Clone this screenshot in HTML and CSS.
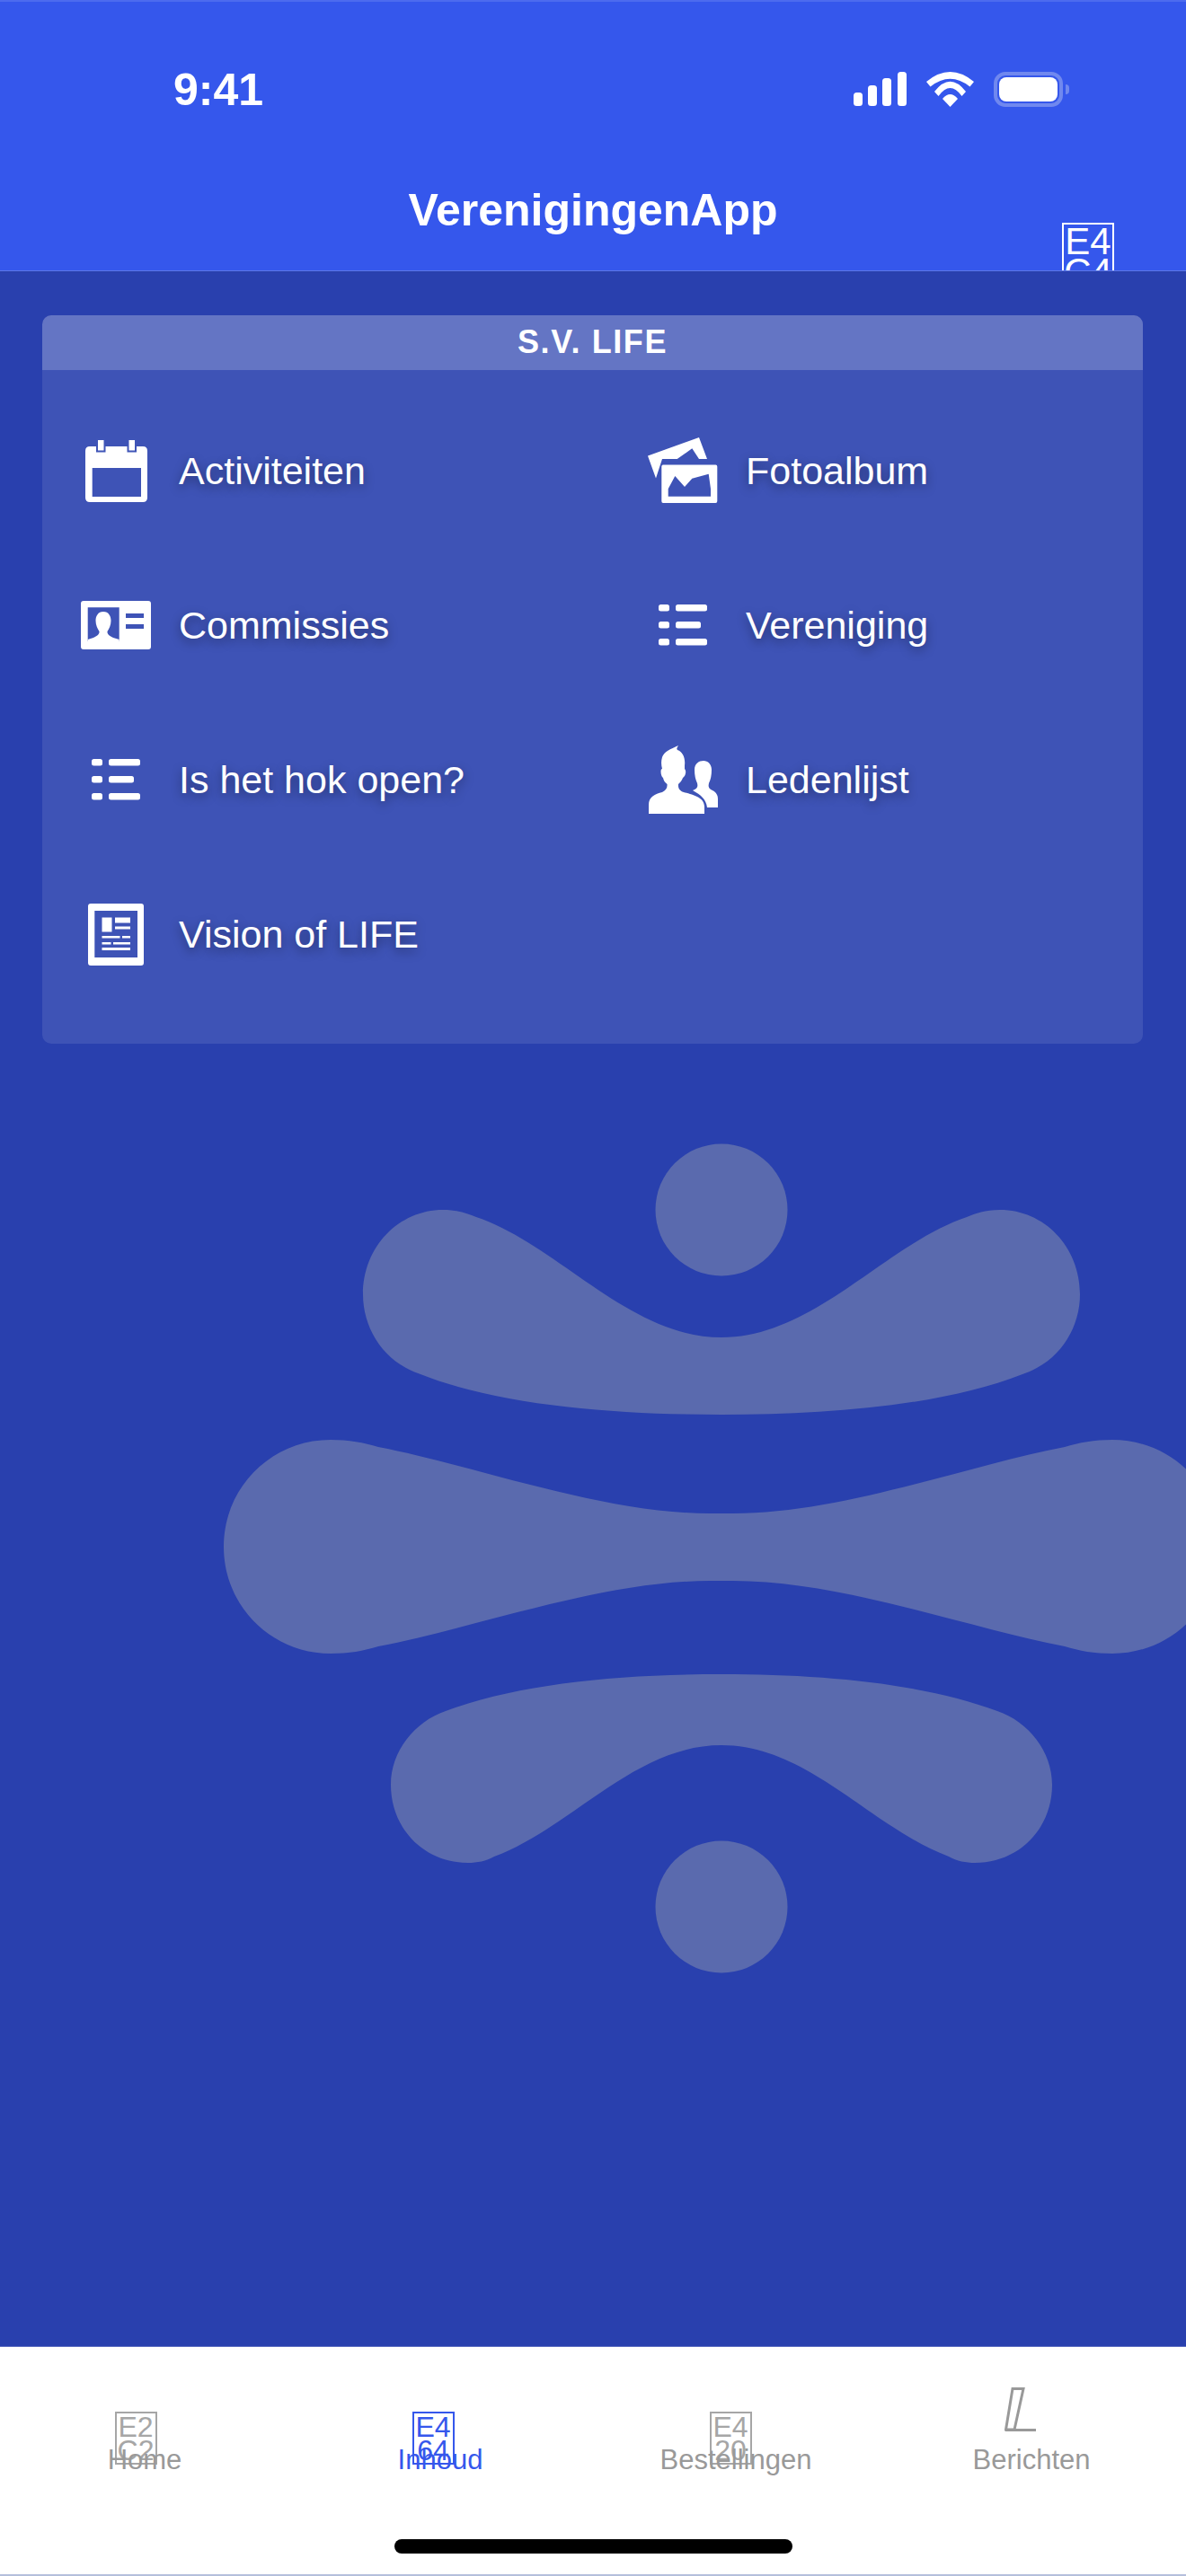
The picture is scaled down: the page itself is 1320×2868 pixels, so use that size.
FILE: index.html
```html
<!DOCTYPE html>
<html lang="nl">
<head>
<meta charset="utf-8">
<title>VerenigingenApp</title>
<link rel="stylesheet" href="styles.css">
</head>
<body>
<div class="app">
  <header class="header">
    <div class="status">
      <span class="clock">9:41</span>
      <div class="status-icons">
        <svg class="signal" width="59" height="38" viewBox="0 0 59 38"><rect x="0" y="23" width="10" height="15" rx="3.500"/><rect x="16" y="15" width="10" height="23" rx="3.500"/><rect x="32" y="7" width="10" height="31" rx="3.500"/><rect x="49" y="0" width="10" height="38" rx="3.500"/></svg>
        <svg class="wifi" width="53" height="39" viewBox="0 0 53 39"><path d="M0 11Q26.500-11 53 11L48.500 16.500Q26.500-1 4.500 16.500Z"/><path d="M9 22Q26.500-.6 44 22L39.500 27Q26.500 9 13.500 27Z"/><path d="M18 30Q26.500 20 35 30L26.500 39Z"/></svg>
        <div class="battery"><div class="battery-fill"></div></div>
        <div class="battery-cap"></div>
      </div>
    </div>
    <div class="titlebar">
      <span></span>
      <h1 class="title">VerenigingenApp</h1>
      <div class="title-action"><div class="tofu tofu-lg">E4<br>C4</div></div>
    </div>
  </header>

  <main class="content">
    <svg class="logo" viewBox="0 1240 1320 1000" aria-hidden="true">
      <circle cx="803" cy="1347" r="73.500"/>
      <circle cx="803" cy="2123" r="73.500"/>
      <path d="M493 1347C510 1347 520 1351 530 1355C620 1385 700 1489 803 1489C906 1489 986 1385 1076 1355C1086 1351 1096 1347 1113 1347C1162 1347 1202 1388 1202 1441C1202 1480 1178 1517 1138 1530C1050 1565 920 1575 803 1575C686 1575 556 1565 468 1530C428 1517 404 1480 404 1441C404 1388 444 1347 493 1347Z"/>
      <path d="M368 1603C388 1603 405 1606 421 1611C530 1632 670 1685 790 1685L816 1685C936 1685 1076 1632 1185 1611C1201 1606 1218 1603 1238 1603C1304 1603 1357 1656 1357 1722C1357 1788 1304 1841 1238 1841C1218 1841 1201 1838 1185 1833C1076 1812 936 1760 816 1760L790 1760C670 1760 530 1812 421 1833C405 1838 388 1841 368 1841C302 1841 249 1788 249 1722C249 1656 302 1603 368 1603Z"/>
      <path d="M803 1864C920 1864 1030 1875 1110 1905C1145 1917 1171 1950 1171 1987C1171 2036 1134 2074 1085 2074C1075 2074 1065 2072 1056 2067C970 2035 900 1943 803 1943C706 1943 636 2035 550 2067C541 2072 531 2074 521 2074C472 2074 435 2036 435 1987C435 1950 461 1917 496 1905C576 1875 686 1864 803 1864Z"/>
    </svg>

    <section class="panel">
      <h2 class="panel-title">S.V. LIFE</h2>
      <div class="menu">
        <a class="item">
          <span class="item-icon">
            <svg width="69" height="70" viewBox="0 0 69 70"><path fill-rule="evenodd" d="M5 8H64Q69 8 69 13V65Q69 70 64 70H5Q0 70 0 65V13Q0 8 5 8ZM7.700 32V64H62V32Z"/><rect class="ring" x="13" y="0" width="8.500" height="13.500"/><rect class="ring" x="47.500" y="0" width="8.500" height="13.500"/></svg>
          </span>
          <span class="item-label">Activiteiten</span>
        </a>
        <a class="item">
          <span class="item-icon">
            <svg width="78" height="54" viewBox="0 0 78 54"><path fill-rule="evenodd" d="M3 0H75Q78 0 78 3V51Q78 54 75 54H3Q0 54 0 51V3Q0 0 3 0ZM7.700 7.300V45H42.700V7.300ZM50 14V19H70V14ZM50 26V31H70V26Z"/><path d="M25 12C31 12 33.500 17 33.500 22C33.500 27 31.500 31 29.500 34C29 37 32 39 36 41L42.700 43V45H7.700V43L14 41C18 39 21 37 20.500 34C18.500 31 16.500 27 16.500 22C16.500 17 19 12 25 12Z"/></svg>
          </span>
          <span class="item-label">Commissies</span>
        </a>
        <a class="item">
          <span class="item-icon">
            <svg width="54" height="46" viewBox="0 0 54 46"><rect x="0" y="0" width="12" height="7.500" rx="2.500"/><rect x="19" y="0" width="35" height="7.500" rx="2.500"/><rect x="0" y="19" width="12" height="7.500" rx="2.500"/><rect x="19" y="19" width="28" height="7.500" rx="2.500"/><rect x="0" y="38" width="12" height="7.500" rx="2.500"/><rect x="19" y="38" width="35" height="7.500" rx="2.500"/></svg>
          </span>
          <span class="item-label">Is het hok open?</span>
        </a>
        <a class="item">
          <span class="item-icon">
            <svg width="62" height="69" viewBox="0 0 62 69"><path fill-rule="evenodd" d="M3 0H59Q62 0 62 3V66Q62 69 59 69H3Q0 69 0 66V3Q0 0 3 0ZM7.300 8V60H55V8Z"/><rect x="15.500" y="15.500" width="11" height="16"/><rect x="30" y="15.500" width="17" height="6"/><rect x="30" y="25.500" width="17" height="3"/><rect x="15.500" y="36" width="20" height="2.500"/><rect x="38" y="36" width="9" height="2.500"/><rect x="15.500" y="43" width="10" height="2.500"/><rect x="28" y="43" width="19" height="2.500"/><rect x="15.500" y="49" width="31.500" height="3"/></svg>
          </span>
          <span class="item-label">Vision of LIFE</span>
        </a>
        <a class="item item-r1">
          <span class="item-icon">
            <svg width="78" height="74" viewBox="0 0 78 74"><path d="M0 20.600L57 0L66 24H57L49.300 12.300L32.700 24H16L9 45.600Z"/><path fill-rule="evenodd" d="M17 30.600H75.500Q77.300 30.600 77.300 32.400V71Q77.300 73 75.500 73H17Q15.300 73 15.300 71V32.400Q15.300 30.600 17 30.600ZM22.700 65.700H70V57.300L67.700 40.700L49.300 45.700L41 55L30.300 43L22.700 57.300Z"/></svg>
          </span>
          <span class="item-label">Fotoalbum</span>
        </a>
        <a class="item item-r2">
          <span class="item-icon">
            <svg width="54" height="46" viewBox="0 0 54 46"><rect x="0" y="0" width="12" height="7.500" rx="2.500"/><rect x="19" y="0" width="35" height="7.500" rx="2.500"/><rect x="0" y="19" width="12" height="7.500" rx="2.500"/><rect x="19" y="19" width="28" height="7.500" rx="2.500"/><rect x="0" y="38" width="12" height="7.500" rx="2.500"/><rect x="19" y="38" width="35" height="7.500" rx="2.500"/></svg>
          </span>
          <span class="item-label">Vereniging</span>
        </a>
        <a class="item item-r3">
          <span class="item-icon">
            <svg width="77" height="76" viewBox="0 0 77 76"><path d="M0 76V66C0 57 7 54 15 52C19 50 21 47 20.500 43C18 41 16.500 39 16 36C14.500 35 13.500 32 13.500 29C13.500 27 14 26 15 26C14 22 13.500 18 15 13C17 7 24 4 33 0C31 3 31 4 32 5C38 7 41 14 40 22C40 24 40 25 40 26C41 27 41.500 29 41 31C40.500 34 39 35 38 36C37 39 35 41 33 43C32.500 47 34 50 39 52C50 55 62 58 62 68V76Z"/><path d="M49 50C54 48 55 46 54 42C52 38 51 33 51 27C51 20 56 17 61 17C66 17 70 21 70 27C70 33 69 38 67 42C66 46 67 48 71 50C75 52 77 55 77 60V69H65C64 60 58 55 49 50Z"/></svg>
          </span>
          <span class="item-label">Ledenlijst</span>
        </a>
      </div>
    </section>
  </main>

  <footer class="tabbar">
    <nav class="tabs">
      <a class="tab">
        <span class="tab-icon"><span class="tofu tofu-home">E2<br>C2</span></span>
        <span class="tab-label">Home</span>
      </a>
      <a class="tab tab-active">
        <span class="tab-icon"><span class="tofu tofu-inhoud">E4<br>64</span></span>
        <span class="tab-label">Inhoud</span>
      </a>
      <a class="tab">
        <span class="tab-icon"><span class="tofu tofu-orders">E4<br>20</span></span>
        <span class="tab-label">Bestellingen</span>
      </a>
      <a class="tab">
        <span class="tab-icon">
          <svg class="tab-glyph" width="36" height="50" viewBox="0 0 36 50"><path d="M9 1.500H21L11 47H1.500Z M1 47.500H35"/></svg>
        </span>
        <span class="tab-label">Berichten</span>
      </a>
    </nav>
    <div class="home-indicator"></div>
  </footer>
</div>
</body>
</html>
```

FILE: styles.css
```css
* { box-sizing: border-box; }
html, body { margin: 0; padding: 0; }
body { font-family: "Liberation Sans", Arial, sans-serif; background: #2940ae; }
.app { width: 1320px; height: 2868px; display: flex; flex-direction: column; overflow: hidden; }

.header { height: 302px; background: #3557ec; border-top: 2px solid #4c6bef; border-bottom: 1px solid #5d78e6; color: #fff; overflow: hidden; flex: none; }
.status { display: flex; justify-content: space-between; align-items: flex-start; padding: 78px 130px 0 193px; height: 184px; }
.clock { font-size: 50px; font-weight: 700; line-height: 40px; }
.status-icons { display: flex; align-items: flex-start; }
.status-icons svg { fill: #fff; display: block; }
.wifi { margin-left: 22px; }
.battery { margin-left: 22px; width: 77px; height: 39px; border: 4px solid #7088ef; border-radius: 13px; padding: 2px; }
.battery-fill { width: 100%; height: 100%; background: #fff; border-radius: 8px; }
.battery-cap { width: 4px; height: 11px; margin: 14px 0 0 3px; background: #7088ef; border-radius: 0 6px 6px 0; }

.titlebar { display: grid; grid-template-columns: 1fr auto 1fr; align-items: start; }
.title { margin: 0; font-size: 50px; font-weight: 700; line-height: 60px; margin-top: 18px; }
.title-action { display: flex; justify-content: flex-end; padding: 62px 80px 0 0; }

.tofu { display: block; border: 2px solid currentColor; text-align: center; overflow: hidden; font-weight: 400; }
.tofu-lg { width: 58px; height: 90px; font-size: 42px; line-height: 34px; padding-top: 2px; }
.tofu-home, .tofu-inhoud, .tofu-orders { width: 47px; height: 59px; font-size: 32px; line-height: 26px; padding-top: 2px; }
.tofu-home { margin-left: -20px; color: #a6a6a6; }
.tofu-inhoud { margin-left: -16px; color: #3557ec; }
.tofu-orders { margin-left: -12px; color: #a6a6a6; }

.content { position: relative; flex: 1; background: #2940ae; padding: 49px 48px 0 47px; }
.logo { position: absolute; left: 0; top: 938px; width: 1320px; height: 1000px; fill: #5a6aae; }
.panel { position: relative; height: 811px; background: rgba(255,255,255,.1); border-radius: 10px; overflow: hidden; }
.panel-title { margin: 0; height: 61px; line-height: 59px; background: rgba(255,255,255,.2); color: #fff; font-size: 36px; font-weight: 700; text-align: center; letter-spacing: 1.6px; }
.menu { display: grid; grid-template-columns: 631px 1fr; grid-template-rows: repeat(4, 172px); grid-auto-flow: column; padding: 26px 0 0 43px; }
.item { display: flex; align-items: center; color: #fff; }
.item-r1 { grid-column: 2; grid-row: 1; }
.item-r2 { grid-column: 2; grid-row: 2; }
.item-r3 { grid-column: 2; grid-row: 3; }
.item-icon { width: 78px; height: 80px; display: flex; align-items: center; justify-content: center; flex: none; }
.item-icon svg { fill: #fff; display: block; overflow: visible; }
.ring { stroke: #3f54b7; stroke-width: 2; }
.item-label { margin-left: 31px; font-size: 43px; line-height: 50px; text-shadow: 0 4px 12px rgba(0,0,0,.4); }

.tabbar { flex: none; height: 256px; background: #fff; border-top: 1px solid #5a6cc0; border-bottom: 2px solid #b5bfdc; display: flex; flex-direction: column; align-items: center; }
.tabs { width: 1316px; margin-left: -11px; height: 214px; display: grid; grid-template-columns: repeat(4, 1fr); }
.tab { display: flex; flex-direction: column; align-items: center; padding-top: 72px; color: #999; }
.tab-active { color: #3557ec; }
.tab-icon { display: flex; height: 36px; align-items: flex-start; }
.tab-label { font-size: 31px; line-height: 36px; }
.tab-glyph { margin: -27px 0 0 -24px; fill: none; stroke: #999; stroke-width: 3; }
.home-indicator { width: 443px; height: 16px; background: #000; border-radius: 8px; }
```
